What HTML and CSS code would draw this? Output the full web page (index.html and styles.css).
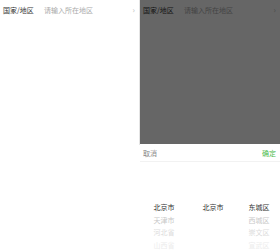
FILE: index.html
```html
<!DOCTYPE html>
<html>
<head>
<meta charset="utf-8">
<link rel="stylesheet" href="styles.css">
</head>
<body>
<div class="stage">
  <div class="panel left">
    <div class="row">
      <span class="label">国家/地区</span>
      <span class="placeholder">请输入所在地区</span>
      <span class="arrow">›</span>
    </div>
  </div>
  <div class="panel right">
    <div class="row">
      <span class="label">国家/地区</span>
      <span class="placeholder">请输入所在地区</span>
      <span class="arrow">›</span>
    </div>
    <div class="mask"></div>
    <div class="picker">
      <div class="picker-head">
        <span class="cancel">取消</span>
        <span class="ok">确定</span>
      </div>
      <div class="picker-body">
        <div class="col">
          <div class="item sel">北京市</div>
          <div class="item f1">天津市</div>
          <div class="item f2">河北省</div>
          <div class="item f3">山西省</div>
        </div>
        <div class="col">
          <div class="item sel">北京市</div>
        </div>
        <div class="col">
          <div class="item sel">东城区</div>
          <div class="item f1">西城区</div>
          <div class="item f2">崇文区</div>
          <div class="item f3">宣武区</div>
        </div>
      </div>
    </div>
  </div>
</div>
</body>
</html>
```
FILE: styles.css
```css
* { box-sizing: border-box; }
html, body { margin: 0; padding: 0; background: #fff; }
body { font-family: "Noto Sans CJK SC", "Noto Sans", sans-serif; font-size: 7px; color: #333; }
.stage { display: flex; width: 280px; height: 250px; overflow: hidden; }
.panel { width: 140px; height: 250px; position: relative; flex-shrink: 0; }
.left { border-right: 1px solid #e4e4e4; height: 145px; }
.row { display: flex; align-items: center; height: 19px; padding: 0 4px 0 3px; white-space: nowrap; }
.label { width: 41px; color: #333; flex-shrink: 0; }
.placeholder { flex: 1; color: #aaa; }
.arrow { color: #bbb; font-size: 8px; }
.mask { position: absolute; left: 0; top: 0; width: 140px; height: 144px; background: rgba(0,0,0,0.6); }
.picker { position: absolute; left: 0; top: 144px; width: 140px; height: 106px; background: #fff; overflow: hidden; }
.picker-head { display: flex; justify-content: space-between; align-items: center; height: 18px; padding: 0 4px 0 3px; border-bottom: 1px solid #f2f2f2; }
.cancel { color: #888; }
.ok { color: #4cba4a; }
.picker-body { display: grid; grid-template-columns: 48px 50px 42px; padding-top: 39px; }
.col { display: flex; flex-direction: column; align-items: center; }
.item { height: 12.5px; line-height: 12.5px; flex-shrink: 0; white-space: nowrap; }
.sel { color: #333; }
.f1 { color: #c8c8c8; }
.f2 { color: #dcdcdc; }
.f3 { color: #ececec; }
```
